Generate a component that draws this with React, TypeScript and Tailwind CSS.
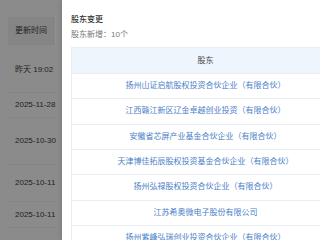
const holders = [
  "扬州山证启航股权投资合伙企业（有限合伙）",
  "江西赣江新区辽金卓越创业投资（有限合伙）",
  "安徽省芯屏产业基金合伙企业（有限合伙）",
  "天津博佳拓辰股权投资基金合伙企业（有限合伙）",
  "扬州弘禄股权投资合伙企业（有限合伙）",
  "江苏希奥微电子股份有限公司",
  "扬州紫峰弘瑞创业投资合伙企业（有限合伙）",
];

const updates = [
  { time: "昨天 19:02", h: "h-[45px]" },
  { time: "2025-11-28", h: "h-[25px]" },
  { time: "2025-10-30", h: "h-[47px]" },
  { time: "2025-10-11", h: "h-[37px]" },
  { time: "2025-10-11", h: "h-[26px]" },
  { time: "", h: "h-[30px]" },
];

export default function App() {
  return (
    <div className="flex w-[320px] h-[240px] overflow-hidden text-[8px] leading-none font-['Liberation_Sans','Noto_Sans_CJK_SC',sans-serif]">
      {/* page under the mask */}
      <div className="w-[62px] shrink-0 bg-[#8b8b8b] pt-[17px] pl-[8px] pr-[6px]">
        <div className="h-[28px] bg-[#858585] flex items-center pl-[7px] text-[#1e1e1e] border-r border-[#919191]">
          更新时间
        </div>
        <div className="h-[3px]" />
        {updates.map((u, i) => (
          <div
            key={i}
            className={`${u.h} flex items-center pl-[7px] text-[#1e1e1e] border-b border-[#858585]`}
          >
            {u.time}
          </div>
        ))}
      </div>

      {/* drawer */}
      <div className="flex-1 bg-white shadow-[-2px_0_4px_rgba(0,0,0,0.08)] pl-[9px] pt-[16px] overflow-hidden">
        <div className="text-[#333] font-medium">股东变更</div>
        <div className="mt-[7px] text-[#777]">股东新增：10个</div>
        <div className="mt-[8px] w-[268px] border-l border-t border-[#e9edf2]">
          <div className="h-[26px] bg-[#eef5fd] flex items-center justify-center text-[#444] border-b border-[#e9edf2]">
            股东
          </div>
          {holders.map((name) => (
            <div
              key={name}
              className="h-[25.33px] flex items-center justify-center text-[#4a80c8] border-b border-[#e9edf2]"
            >
              {name}
            </div>
          ))}
        </div>
      </div>
    </div>
  );
}
